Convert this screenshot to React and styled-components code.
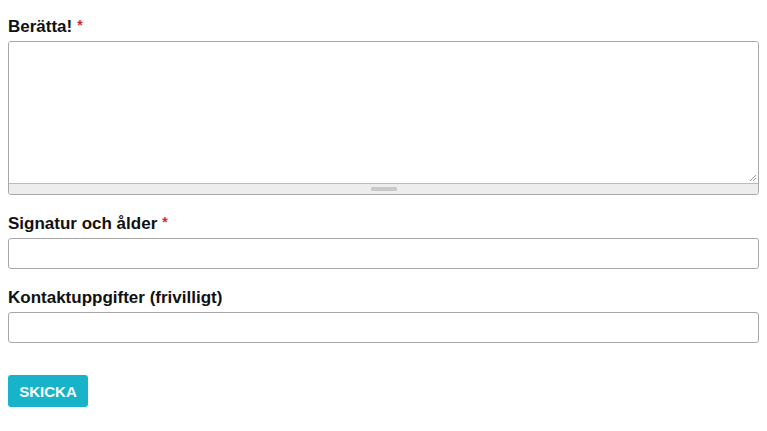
import React from 'react';
import styled, { createGlobalStyle } from 'styled-components';

const GlobalStyle = createGlobalStyle`
  body {
    margin: 0;
    background: #fff;
    font-family: "Liberation Sans", Arial, sans-serif;
    color: #111;
  }
`;

const Form = styled.form`
  padding: 17px 8px 0 8px;
  display: flex;
  flex-direction: column;
`;

const Field = styled.div`
  display: flex;
  flex-direction: column;
  margin-bottom: ${p => p.$gap}px;
`;

const Label = styled.label`
  font-size: 17px;
  font-weight: bold;
  line-height: 20px;
  height: 20px;
  margin-bottom: 4px;
  color: #111;
`;

const Required = styled.span`
  position: relative;
  top: -2px;
  color: #d42a2a;
  font-size: 14px;
  line-height: 1;
  margin-left: 5px;
`;

const AreaBox = styled.div`
  border: 1px solid #a7a7a7;
  border-radius: 3px;
  overflow: hidden;
  display: flex;
  flex-direction: column;
`;

const AreaWrap = styled.div`
  position: relative;
`;

const TextArea = styled.textarea`
  display: block;
  width: 100%;
  height: 142px;
  border: none;
  border-bottom: 1px solid #bbb;
  margin: 0;
  padding: 4px;
  box-sizing: border-box;
  resize: none;
  outline: none;
  font: inherit;
`;

const ResizeCorner = styled.svg`
  position: absolute;
  right: 1px;
  bottom: 2px;
`;

const Grip = styled.div`
  height: 10px;
  background: #ededed;
  display: flex;
  justify-content: center;
  align-items: center;
`;

const GripHandle = styled.span`
  width: 26px;
  height: 4px;
  background: #c9c9c9;
  border-radius: 1px;
`;

const Input = styled.input`
  height: 31px;
  box-sizing: border-box;
  border: 1px solid #a7a7a7;
  border-radius: 3px;
  padding: 0 6px;
  font: inherit;
  outline: none;
`;

const Button = styled.button`
  align-self: flex-start;
  width: 80px;
  height: 32px;
  padding: 0;
  background: #17b4c9;
  color: #fff;
  border: none;
  border-radius: 3px;
  font-family: "Liberation Sans", Arial, sans-serif;
  font-weight: bold;
  font-size: 15px;
  cursor: pointer;
`;

export default function App() {
  return (
    <>
      <GlobalStyle />
      <Form onSubmit={e => e.preventDefault()}>
        <Field $gap={19}>
          <Label>Berätta!<Required>*</Required></Label>
          <AreaBox>
            <AreaWrap>
              <TextArea />
              <ResizeCorner width="9" height="9" viewBox="0 0 9 9">
                <path d="M8 2 L2 8 M8 5 L5 8" stroke="#999" strokeWidth="1" fill="none" />
              </ResizeCorner>
            </AreaWrap>
            <Grip><GripHandle /></Grip>
          </AreaBox>
        </Field>
        <Field $gap={19}>
          <Label>Signatur och ålder<Required>*</Required></Label>
          <Input type="text" />
        </Field>
        <Field $gap={32}>
          <Label>Kontaktuppgifter (frivilligt)</Label>
          <Input type="text" />
        </Field>
        <Button type="submit">SKICKA</Button>
      </Form>
    </>
  );
}
